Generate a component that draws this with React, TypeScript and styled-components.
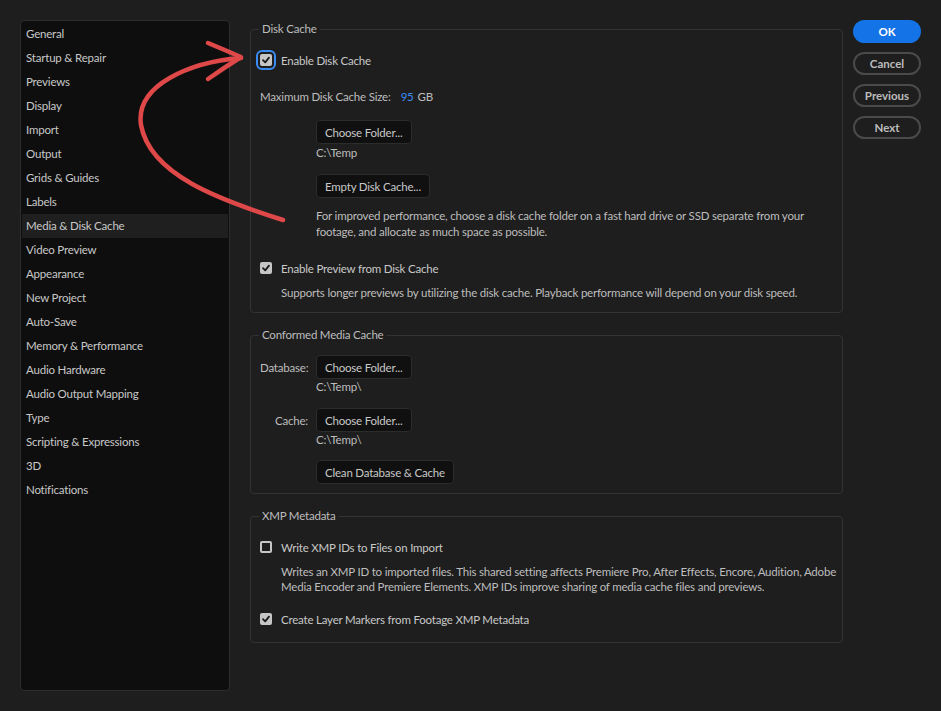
import React from "react";
import styled, { createGlobalStyle } from "styled-components";

const Global = createGlobalStyle`
  html, body { margin: 0; padding: 0; background: #1e1e1e; }
  body { font-family: Lato, "Open Sans", sans-serif; }
  * { box-sizing: border-box; }
`;

const Page = styled.div`
  position: relative;
  width: 941px;
  height: 711px;
  padding: 20px;
  background: #1e1e1e;
  display: flex;
  align-items: flex-start;
  font-family: Lato, "Open Sans", sans-serif;
  font-size: 11.5px;
  letter-spacing: -0.2px;
  color: #c4c4c4;
`;

const Sidebar = styled.ul`
  list-style: none;
  margin: 0 20px 0 0;
  padding: 1px;
  width: 210px;
  height: 671px;
  background: #0e0e0e;
  border: 1px solid #2e2e2e;
  border-radius: 4px;
  flex-shrink: 0;
`;

const NavItem = styled.li<{ $active?: boolean }>`
  height: 24px;
  line-height: 24px;
  padding-left: 4px;
  background: ${(p) => (p.$active ? "#1f1f1f" : "transparent")};
  color: #c8c8c8;
  white-space: nowrap;
`;

const Main = styled.div`
  width: 593px;
  display: flex;
  flex-direction: column;
  gap: 13px;
  flex-shrink: 0;
`;

const Group = styled.fieldset<{ $pb: number }>`
  margin: 0;
  padding: 0 0 ${(p) => p.$pb}px 9px;
  border: 1px solid #333333;
  border-radius: 4px;
  min-width: 0;
`;

const Legend = styled.legend`
  margin-left: -1px;
  padding: 0 3px;
  line-height: 18px;
  color: #bdbdbd;
`;

const Block = styled.div<{ $mt: number; $ml?: number }>`
  margin-top: ${(p) => p.$mt}px;
  margin-left: ${(p) => p.$ml ?? 0}px;
`;

const CheckRow = styled.label<{ $mt: number }>`
  display: flex;
  align-items: center;
  height: 20px;
  margin-top: ${(p) => p.$mt}px;
  gap: 9px;
  color: #c8c8c8;
`;

const BoxWrap = styled.span<{ $focus?: boolean }>`
  width: 12px;
  height: 12px;
  display: flex;
  align-items: center;
  justify-content: center;
  flex-shrink: 0;
  ${(p) =>
    p.$focus
      ? `outline: 2px solid #3b8cf2; outline-offset: 2px; border-radius: 2px;`
      : ""}
`;

const Box = styled.span<{ $checked: boolean }>`
  width: 12px;
  height: 12px;
  border-radius: 2px;
  display: flex;
  align-items: center;
  justify-content: center;
  background: ${(p) => (p.$checked ? "#c6c6c6" : "transparent")};
  border: ${(p) => (p.$checked ? "none" : "2px solid #c6c6c6")};
`;

const Text = styled.div<{ $mt: number; $ml?: number; $lh?: number }>`
  margin-top: ${(p) => p.$mt}px;
  margin-left: ${(p) => p.$ml ?? 0}px;
  line-height: ${(p) => p.$lh ?? 16}px;
  color: #bdbdbd;
  white-space: nowrap;
`;

const SizeRow = styled.div`
  display: flex;
  align-items: center;
  height: 20px;
  margin-top: 16px;
  color: #bdbdbd;
`;

const Blue = styled.span`
  color: #3d8ef5;
  margin-left: 10px;
  margin-right: 4px;
`;

const Btn = styled.button<{ $mt?: number }>`
  display: block;
  height: 24px;
  margin-top: ${(p) => p.$mt ?? 0}px;
  padding: 0 8px;
  background: #101010;
  border: 1px solid #2c2c2c;
  border-radius: 4px;
  color: #c8c8c8;
  font-family: inherit;
  font-size: 11.5px;
  letter-spacing: -0.2px;
`;

const FieldRow = styled.div<{ $mt: number }>`
  display: flex;
  align-items: center;
  margin-top: ${(p) => p.$mt}px;
  gap: 8px;
`;

const FieldLabel = styled.span`
  width: 48px;
  text-align: right;
  color: #bdbdbd;
`;

const Actions = styled.div`
  margin-left: 10px;
  width: 68px;
  display: flex;
  flex-direction: column;
  gap: 9px;
`;

const Pill = styled.button<{ $primary?: boolean }>`
  height: 23px;
  border-radius: 12px;
  font-family: inherit;
  font-size: 11.5px;
  font-weight: 700;
  color: ${(p) => (p.$primary ? "#ffffff" : "#bcbcbc")};
  background: ${(p) => (p.$primary ? "#1473e6" : "transparent")};
  border: ${(p) => (p.$primary ? "none" : "2px solid #4a4a4a")};
  padding: 0;
`;

const Overlay = styled.svg`
  position: absolute;
  left: 0;
  top: 0;
  pointer-events: none;
`;

const Check = () => (
  <svg width="10" height="10" viewBox="0 0 10 10">
    <path d="M2 5.2 L4.2 7.4 L8 2.6" fill="none" stroke="#1a1a1a" strokeWidth="1.8" strokeLinecap="round" strokeLinejoin="round" />
  </svg>
);

const CheckBox = ({ checked, focus }: { checked: boolean; focus?: boolean }) => (
  <BoxWrap $focus={focus}>
    <Box $checked={checked}>{checked && <Check />}</Box>
  </BoxWrap>
);

const nav = [
  "General",
  "Startup & Repair",
  "Previews",
  "Display",
  "Import",
  "Output",
  "Grids & Guides",
  "Labels",
  "Media & Disk Cache",
  "Video Preview",
  "Appearance",
  "New Project",
  "Auto-Save",
  "Memory & Performance",
  "Audio Hardware",
  "Audio Output Mapping",
  "Type",
  "Scripting & Expressions",
  "3D",
  "Notifications",
];

export default function App() {
  return (
    <>
      <Global />
      <Page>
        <Sidebar>
          {nav.map((n) => (
            <NavItem key={n} $active={n === "Media & Disk Cache"}>
              {n}
            </NavItem>
          ))}
        </Sidebar>
        <Main>
          <Group $pb={11}>
            <Legend>Disk Cache</Legend>
            <CheckRow $mt={12}>
              <CheckBox checked focus />
              Enable Disk Cache
            </CheckRow>
            <SizeRow>
              Maximum Disk Cache Size:<Blue>95</Blue>GB
            </SizeRow>
            <Block $mt={14} $ml={56}>
              <Btn>Choose Folder...</Btn>
              <Text $mt={1}>C:\Temp</Text>
              <Btn $mt={13}>Empty Disk Cache...</Btn>
              <Text $mt={10}>
                For improved performance, choose a disk cache folder on a fast hard drive or SSD separate from your
                <br />
                footage, and allocate as much space as possible.
              </Text>
            </Block>
            <CheckRow $mt={18}>
              <CheckBox checked />
              Enable Preview from Disk Cache
            </CheckRow>
            <Text $mt={7} $ml={21}>
              Supports longer previews by utilizing the disk cache. Playback performance will depend on your disk speed.
            </Text>
          </Group>

          <Group $pb={9}>
            <Legend>Conformed Media Cache</Legend>
            <FieldRow $mt={11}>
              <FieldLabel>Database:</FieldLabel>
              <Btn>Choose Folder...</Btn>
            </FieldRow>
            <Text $mt={0} $ml={56}>C:\Temp\</Text>
            <FieldRow $mt={13}>
              <FieldLabel>Cache:</FieldLabel>
              <Btn>Choose Folder...</Btn>
            </FieldRow>
            <Text $mt={0} $ml={56}>C:\Temp\</Text>
            <Block $mt={12} $ml={56}>
              <Btn>Clean Database &amp; Cache</Btn>
            </Block>
          </Group>

          <Group $pb={13}>
            <Legend>XMP Metadata</Legend>
            <CheckRow $mt={12}>
              <CheckBox checked={false} />
              Write XMP IDs to Files on Import
            </CheckRow>
            <Text $mt={7} $ml={21} $lh={15}>
              Writes an XMP ID to imported files. This shared setting affects Premiere Pro, After Effects, Encore, Audition, Adobe
              <br />
              Media Encoder and Premiere Elements. XMP IDs improve sharing of media cache files and previews.
            </Text>
            <CheckRow $mt={15}>
              <CheckBox checked />
              Create Layer Markers from Footage XMP Metadata
            </CheckRow>
          </Group>
        </Main>
        <Actions>
          <Pill $primary>OK</Pill>
          <Pill>Cancel</Pill>
          <Pill>Previous</Pill>
          <Pill>Next</Pill>
        </Actions>
        <Overlay width="941" height="711" viewBox="0 0 941 711">
          <g fill="none" stroke="#df4848" strokeWidth="4.5" strokeLinecap="round" strokeLinejoin="round">
            <path d="M283 220 C220 200, 150 175, 141 125 C135 85, 190 62, 241 58" />
            <path d="M208 43 C220 48, 232 53, 241 57 C230 64, 218 72, 208 79" />
          </g>
        </Overlay>
      </Page>
    </>
  );
}
